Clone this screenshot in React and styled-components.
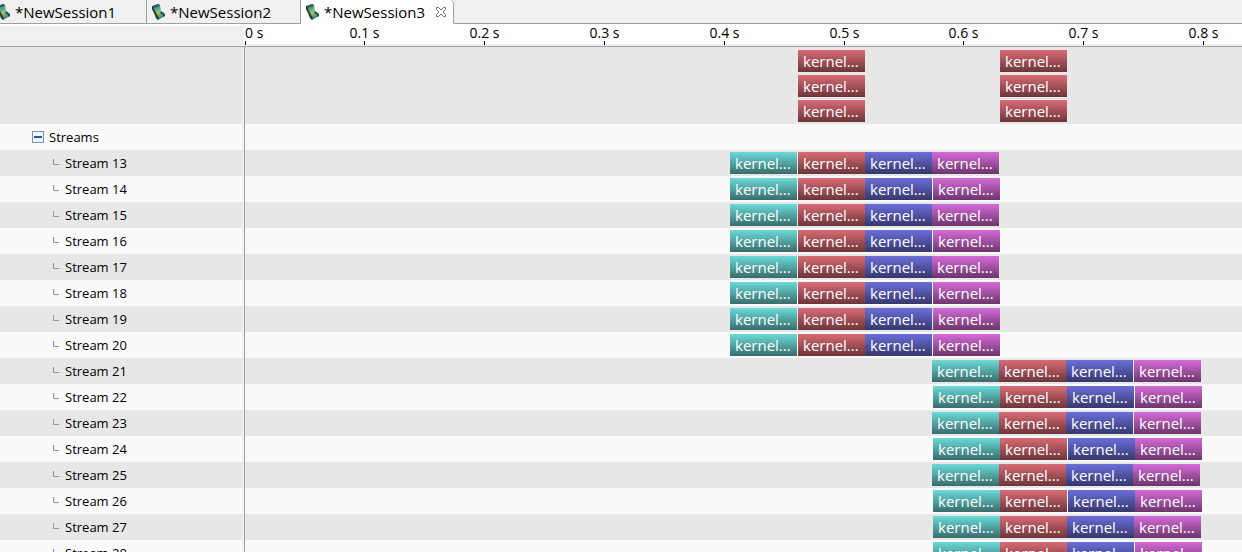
import React from "react";
import styled, { createGlobalStyle } from "styled-components";

const GlobalStyle = createGlobalStyle`
  * { box-sizing: border-box; }
  html, body, #root { height: 100%; }
  body { margin: 0; overflow: hidden; background: #f0f0f0; color: #000; font: 14px/20px "Open Sans", "Noto Sans", sans-serif; }
`;

const Window = styled.main`
  display: flex;
  flex-direction: column;
  height: 100%;
  overflow: hidden;
`;

const TabBar = styled.nav`
  display: flex;
  flex: none;
  height: 24px;
`;

const Tab = styled.div`
  display: flex;
  align-items: center;
  flex: none;
  height: 24px;
  width: ${(p) => p.$width}px;
  padding-left: ${(p) => (p.$clipped ? 0 : 4)}px;
  border-right: 1px solid #a0a0a0;
  border-bottom: 1px solid ${(p) => (p.$active ? "#fff" : "#a0a0a0")};
  border-top-right-radius: ${(p) => (p.$active ? 4 : 0)}px;
  background: ${(p) => (p.$active ? "#fff" : "#f0f0f0")};
`;

const TabButton = styled.button`
  display: flex;
  align-items: center;
  gap: 4px;
  padding: 0;
  border: 0;
  background: none;
  color: inherit;
  font: 15px/20px "Open Sans", "Noto Sans", sans-serif;
  white-space: nowrap;
`;

const IconSlot = styled.span`
  display: flex;
  justify-content: flex-end;
  flex: none;
  width: ${(p) => (p.$clipped ? 11 : 15)}px;
  overflow: hidden;

  svg {
    flex: none;
  }
`;

const TabFiller = styled.div`
  flex: 1;
  border-bottom: 1px solid #a0a0a0;
`;

const CloseButton = styled.button`
  display: flex;
  padding: 0;
  margin-left: 10px;
  border: 0;
  background: none;
`;

const Header = styled.div`
  display: flex;
  flex: none;
  height: 23px;
  border-top: 2px solid #fff;
  border-bottom: 1px solid #a0a0a0;
`;

const HeaderCorner = styled.div`
  flex: none;
  width: 244px;
`;

const Ruler = styled.div`
  display: flex;
  flex: 1;
  min-width: 0;
  height: 18px;
  padding-left: 1px;
  background: #fff;
`;

const Tick = styled.div`
  display: flex;
  flex-direction: column;
  flex: none;
  align-items: ${(p) => (p.$first ? "flex-start" : "center")};
  width: 1px;
  margin-left: ${(p) => p.$gap}px;
  line-height: 14px;
  white-space: nowrap;

  &::after {
    content: "";
    flex: none;
    width: 1px;
    height: 4px;
    margin-top: 1px;
    background: #000;
  }
`;

const Rows = styled.div`
  flex: 1;
  min-height: 0;
  overflow: hidden;
`;

const Row = styled.div`
  display: flex;
  height: ${(p) => (p.$tall ? 77 : 26)}px;
  background: ${(p) => (p.$shaded ? "#e7e7e7" : "#fafafa")};
`;

const TreeCell = styled.div`
  display: flex;
  align-items: center;
  gap: 5px;
  flex: none;
  width: 245px;
  padding-left: ${(p) => (p.$leaf ? 52 : 32)}px;
  border-right: 1px solid #a0a0a0;
  box-shadow: inset -2px 0 #f0f0f0;
  font-size: 13px;
`;

const Toggle = styled.button`
  display: flex;
  padding: 0;
  border: 0;
  background: none;
`;

const Lanes = styled.div`
  display: flex;
  flex: 1;
  flex-direction: column;
  gap: 3px;
  min-width: 0;
  padding-top: ${(p) => (p.$tall ? 3 : 2)}px;
`;

const Lane = styled.div`
  display: flex;
  flex: none;
  height: 22px;
`;

const fills = {
  teal: ["#6bdbd9", "#386c6b"],
  red: ["#d96b74", "#6c363a"],
  blue: ["#6b6fd9", "#36386c"],
  pink: ["#d66bd9", "#6b366c"],
};

const Kernel = styled.div`
  flex: none;
  width: 67px;
  margin-left: ${(p) => p.$gap}px;
  padding-left: 5px;
  background: linear-gradient(${(p) => fills[p.$fill].join(", ")});
  color: #fff;
  font-size: 15px;
  line-height: 22px;
  white-space: nowrap;
`;

const SessionIcon = () => (
  <svg width="15" height="18" viewBox="0 0 15 18" aria-hidden="true">
    <defs>
      <linearGradient id="boot" x1="0" y1="0" x2="0.4" y2="1">
        <stop offset="0" stopColor="#3d7260" />
        <stop offset=".35" stopColor="#4a9c98" />
        <stop offset=".65" stopColor="#a2c860" />
        <stop offset="1" stopColor="#3c7f86" />
      </linearGradient>
    </defs>
    <path d="M1 3 7 1 9 2 10 8 14 11 14 13 7 17 5 15 3 10 1 6Z" fill="url(#boot)" />
    <path d="M1 3 2 3 4 8 8 15 7 17 5 15 3 10 1 6Z" fill="#263c3e" />
    <path d="M2 3 7 1 9 2 8 3 3 5Z" fill="#36604c" />
    <path d="M10 8 14 11 14 13 12 14 12 12 9 10Z" fill="#24506c" />
  </svg>
);

const CloseIcon = () => (
  <svg width="12" height="12" viewBox="0 0 12 12" fill="none" stroke="#707070" aria-hidden="true">
    <path d="M1.500 1.500h2L6 4l2.500-2.500h2v2L8 6l2.500 2.500v2h-2L6 8l-2.500 2.500h-2v-2L4 6 1.500 3.500z" />
  </svg>
);

const MinusIcon = () => (
  <svg width="12" height="12" viewBox="0 0 12 12" aria-hidden="true">
    <rect x=".5" y=".5" width="11" height="11" fill="#e6f7fd" stroke="#7f93b2" />
    <path d="M2 5h8v2H2z" fill="#2f5597" />
  </svg>
);

const LeafIcon = () => (
  <svg width="8" height="8" viewBox="0 0 8 8" fill="none" aria-hidden="true">
    <path d="M2.500 0v5" stroke="#d8edf8" />
    <path d="M1.500 0v5.500h5.500" stroke="#8298b4" />
  </svg>
);

const sessions = [
  { name: "*NewSession1", width: 147, clipped: true },
  { name: "*NewSession2", width: 154 },
  { name: "*NewSession3", width: 153, active: true },
];

const ticks = [
  ["0 s", 0], ["0.1 s", 118], ["0.2 s", 119], ["0.3 s", 119], ["0.4 s", 119],
  ["0.5 s", 119], ["0.6 s", 118], ["0.7 s", 119], ["0.8 s", 119],
];

const order = ["teal", "red", "blue", "pink"];

/* Idle pixels before each of a stream's four kernels */
const streams = [
  [13, [485, 1, 0, 0]],
  [14, [485, 1, 0, 1]],
  [15, [485, 1, 0, 0]],
  [16, [485, 1, 0, 1]],
  [17, [485, 1, 0, 0]],
  [18, [485, 1, 0, 1]],
  [19, [485, 1, 0, 1]],
  [20, [485, 1, 0, 1]],
  [21, [687, 0, 0, 1]],
  [22, [688, 0, 0, 1]],
  [23, [687, 0, 0, 1]],
  [24, [688, 0, 1, 0]],
  [25, [687, 0, 0, 0]],
  [26, [688, 0, 1, 0]],
  [27, [688, 0, 0, 0]],
  [28, [688, 0, 0, 1]],
];

export default function App() {
  return (
    <Window>
      <GlobalStyle />
      <TabBar>
        {sessions.map((s) => (
          <Tab key={s.name} $width={s.width} $active={s.active} $clipped={s.clipped}>
            <TabButton>
              <IconSlot $clipped={s.clipped}><SessionIcon /></IconSlot>
              {s.name}
            </TabButton>
            {s.active && <CloseButton aria-label="Close session"><CloseIcon /></CloseButton>}
          </Tab>
        ))}
        <TabFiller />
      </TabBar>
      <Header>
        <HeaderCorner />
        <Ruler>
          {ticks.map(([label, gap], i) => (
            <Tick key={label} $gap={gap} $first={i === 0}>{label}</Tick>
          ))}
        </Ruler>
      </Header>
      <Rows>
        <Row $tall $shaded>
          <TreeCell />
          <Lanes $tall>
            {[0, 1, 2].map((n) => (
              <Lane key={n}>
                <Kernel $fill="red" $gap={553}>kernel...</Kernel>
                <Kernel $fill="red" $gap={135}>kernel...</Kernel>
              </Lane>
            ))}
          </Lanes>
        </Row>
        <Row>
          <TreeCell>
            <Toggle aria-label="Collapse Streams"><MinusIcon /></Toggle>
            Streams
          </TreeCell>
        </Row>
        {streams.map(([id, gaps], row) => (
          <Row key={id} $shaded={row % 2 === 0}>
            <TreeCell $leaf><LeafIcon />Stream {id}</TreeCell>
            <Lanes>
              <Lane>
                {gaps.map((gap, i) => (
                  <Kernel key={order[i]} $fill={order[i]} $gap={gap}>kernel...</Kernel>
                ))}
              </Lane>
            </Lanes>
          </Row>
        ))}
      </Rows>
    </Window>
  );
}
